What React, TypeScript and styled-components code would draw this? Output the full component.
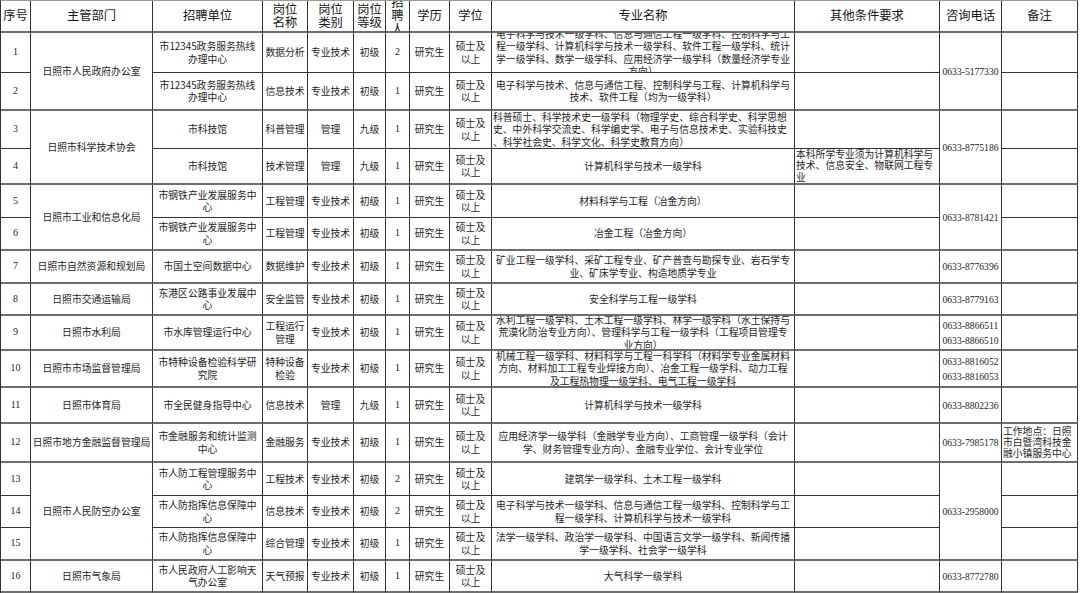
import React from "react";
import styled, { createGlobalStyle } from "styled-components";

const GlobalStyle = createGlobalStyle`
  html, body {
    margin: 0;
    padding: 0;
    background: #fff;
  }
  body {
    font-family: "Noto Sans CJK SC", "Noto Sans", sans-serif;
    color: #1e1e1e;
  }
`;

const Sheet = styled.div<{ $rows: string }>`
  display: grid;
  grid-template-columns: 30px 122px 110px 45px 46px 32px 24px 40px 42px 303px 145px 62px 76px;
  grid-template-rows: ${(p) => p.$rows};
  width: max-content;
  border-left: 1px solid #333;
  border-top: 1px solid #9a9a9a;
`;

const Cell = styled.div<{ $span?: number; $left?: boolean; $end?: boolean }>`
  grid-row: span ${(p) => p.$span ?? 1};
  display: flex;
  align-items: center;
  justify-content: ${(p) => (p.$left ? "flex-start" : "center")};
  text-align: ${(p) => (p.$left ? "left" : "center")};
  box-sizing: border-box;
  min-width: 0;
  min-height: 0;
  padding: 0 ${(p) => (p.$left ? "1px" : "2px")};
  border-right: 1px solid #333;
  border-bottom: ${(p) => (p.$end ? "2px solid #6e6e6e" : "1px solid #333")};
  overflow: hidden;
  white-space: pre;
  font-size: 9.8px;
  line-height: 12.5px;
`;

const HeadCell = styled(Cell)`
  font-size: 12.3px;
  line-height: 13.5px;
  color: #151515;
`;

const NumCell = styled(Cell)`
  font-family: "Liberation Serif", "Noto Sans CJK SC", serif;
  font-size: 10px;
`;

const PhoneCell = styled(Cell)`
  font-family: "Liberation Serif", "Noto Sans CJK SC", serif;
  font-size: 9.6px;
  line-height: 15px;
`;

const NoteCell = styled(Cell)`
  line-height: 11.3px;
`;

type Span = [string, number];

type Row = {
  h: number;
  end?: boolean;
  no: string;
  dept?: Span;
  unit: string;
  post: string;
  kind: string;
  level: string;
  count: string;
  major: string;
  majorLeft?: boolean;
  other?: string;
  phone?: Span;
  note?: string;
};

const headers = [
  "序号",
  "主管部门",
  "招聘单位",
  "岗位\n名称",
  "岗位\n类别",
  "岗位\n等级",
  "招\n聘\n人",
  "学历",
  "学位",
  "专业名称",
  "其他条件要求",
  "咨询电话",
  "备注",
];

const rows: Row[] = [
  {
    h: 40,
    no: "1",
    dept: ["日照市人民政府办公室", 2],
    unit: "市12345政务服务热线\n办理中心",
    post: "数据分析",
    kind: "专业技术",
    level: "初级",
    count: "2",
    major:
      "电子科学与技术一级学科、信息与通信工程一级学科、控制科学与工\n程一级学科、计算机科学与技术一级学科、软件工程一级学科、统计\n学一级学科、数学一级学科、应用经济学一级学科（数量经济学专业\n方向）",
    phone: ["0633-5177330", 2],
  },
  {
    h: 38,
    end: true,
    no: "2",
    unit: "市12345政务服务热线\n办理中心",
    post: "信息技术",
    kind: "专业技术",
    level: "初级",
    count: "1",
    major: "电子科学与技术、信息与通信工程、控制科学与工程、计算机科学与\n技术、软件工程（均为一级学科）",
  },
  {
    h: 38,
    no: "3",
    dept: ["日照市科学技术协会", 2],
    unit: "市科技馆",
    post: "科普管理",
    kind: "管理",
    level: "九级",
    count: "1",
    major:
      "科普硕士、科学技术史一级学科（物理学史、综合科学史、科学思想\n史、中外科学交流史、科学编史学、电子与信息技术史、实验科技史\n、科学社会史、科学文化、科学史教育方向）",
    majorLeft: true,
    phone: ["0633-8775186", 2],
  },
  {
    h: 36,
    end: true,
    no: "4",
    unit: "市科技馆",
    post: "技术管理",
    kind: "管理",
    level: "九级",
    count: "1",
    major: "计算机科学与技术一级学科",
    other: "本科所学专业须为计算机科学与\n技术、信息安全、物联网工程专\n业",
  },
  {
    h: 33,
    no: "5",
    dept: ["日照市工业和信息化局", 2],
    unit: "市钢铁产业发展服务中\n心",
    post: "工程管理",
    kind: "专业技术",
    level: "初级",
    count: "1",
    major: "材料科学与工程（冶金方向）",
    phone: ["0633-8781421", 2],
  },
  {
    h: 33,
    end: true,
    no: "6",
    unit: "市钢铁产业发展服务中\n心",
    post: "工程管理",
    kind: "专业技术",
    level: "初级",
    count: "1",
    major: "冶金工程（冶金方向）",
  },
  {
    h: 33,
    end: true,
    no: "7",
    dept: ["日照市自然资源和规划局", 1],
    unit: "市国土空间数据中心",
    post: "数据维护",
    kind: "专业技术",
    level: "初级",
    count: "1",
    major: "矿业工程一级学科、采矿工程专业、矿产普查与勘探专业、岩石学专\n业、矿床学专业、构造地质学专业",
    phone: ["0633-8776396", 1],
  },
  {
    h: 32,
    end: true,
    no: "8",
    dept: ["日照市交通运输局", 1],
    unit: "东港区公路事业发展中\n心",
    post: "安全监管",
    kind: "专业技术",
    level: "初级",
    count: "1",
    major: "安全科学与工程一级学科",
    phone: ["0633-8779163", 1],
  },
  {
    h: 35,
    end: true,
    no: "9",
    dept: ["日照市水利局", 1],
    unit: "市水库管理运行中心",
    post: "工程运行\n管理",
    kind: "专业技术",
    level: "初级",
    count: "1",
    major:
      "水利工程一级学科、土木工程一级学科、林学一级学科（水土保持与\n荒漠化防治专业方向）、管理科学与工程一级学科（工程项目管理专\n业方向）",
    phone: ["0633-8866511\n0633-8866510", 1],
  },
  {
    h: 37,
    end: true,
    no: "10",
    dept: ["日照市市场监督管理局", 1],
    unit: "市特种设备检验科学研\n究院",
    post: "特种设备\n检验",
    kind: "专业技术",
    level: "初级",
    count: "1",
    major:
      "机械工程一级学科、材料科学与工程一科学科（材料学专业金属材料\n方向、材料加工工程专业焊接方向）、冶金工程一级学科、动力工程\n及工程热物理一级学科、电气工程一级学科",
    phone: ["0633-8816052\n0633-8816053", 1],
  },
  {
    h: 36,
    end: true,
    no: "11",
    dept: ["日照市体育局", 1],
    unit: "市全民健身指导中心",
    post: "信息技术",
    kind: "管理",
    level: "九级",
    count: "1",
    major: "计算机科学与技术一级学科",
    phone: ["0633-8802236", 1],
  },
  {
    h: 39,
    end: true,
    no: "12",
    dept: ["日照市地方金融监督管理局", 1],
    unit: "市金融服务和统计监测\n中心",
    post: "金融服务",
    kind: "专业技术",
    level: "初级",
    count: "1",
    major:
      "应用经济学一级学科（金融学专业方向）、工商管理一级学科（会计\n学、财务管理专业方向）、金融专业学位、会计专业学位",
    phone: ["0633-7985178", 1],
    note: "工作地点：日照\n市白暨湾科技金\n融小镇服务中心",
  },
  {
    h: 33,
    no: "13",
    dept: ["日照市人民防空办公室", 3],
    unit: "市人防工程管理服务中\n心",
    post: "工程技术",
    kind: "专业技术",
    level: "初级",
    count: "2",
    major: "建筑学一级学科、土木工程一级学科",
    phone: ["0633-2958000", 3],
  },
  {
    h: 32,
    no: "14",
    unit: "市人防指挥信息保障中\n心",
    post: "信息技术",
    kind: "专业技术",
    level: "初级",
    count: "2",
    major: "电子科学与技术一级学科、信息与通信工程一级学科、控制科学与工\n程一级学科、计算机科学与技术一级学科",
  },
  {
    h: 33,
    end: true,
    no: "15",
    unit: "市人防指挥信息保障中\n心",
    post: "综合管理",
    kind: "专业技术",
    level: "初级",
    count: "1",
    major: "法学一级学科、政治学一级学科、中国语言文学一级学科、新闻传播\n学一级学科、社会学一级学科",
  },
  {
    h: 32,
    end: true,
    no: "16",
    dept: ["日照市气象局", 1],
    unit: "市人民政府人工影响天\n气办公室",
    post: "天气预报",
    kind: "专业技术",
    level: "初级",
    count: "1",
    major: "大气科学一级学科",
    phone: ["0633-8772780", 1],
  },
];

// a spanned cell always runs to the end of its group, so it takes the group border
const RowCells = ({ row }: { row: Row }) => {
  const e = !!row.end;
  return (
    <>
      <NumCell $end={e}>{row.no}</NumCell>
      {row.dept && (
        <Cell $span={row.dept[1]} $end>
          {row.dept[0]}
        </Cell>
      )}
      <Cell $end={e}>{row.unit}</Cell>
      <Cell $end={e}>{row.post}</Cell>
      <Cell $end={e}>{row.kind}</Cell>
      <Cell $end={e}>{row.level}</Cell>
      <NumCell $end={e}>{row.count}</NumCell>
      <Cell $end={e}>研究生</Cell>
      <Cell $end={e}>{"硕士及\n以上"}</Cell>
      <Cell $end={e} $left={row.majorLeft}>
        {row.major}
      </Cell>
      <NoteCell $end={e} $left>
        {row.other ?? ""}
      </NoteCell>
      {row.phone && (
        <PhoneCell $span={row.phone[1]} $end>
          {row.phone[0]}
        </PhoneCell>
      )}
      <NoteCell $end={e} $left>
        {row.note ?? ""}
      </NoteCell>
    </>
  );
};

const App = (): JSX.Element => {
  const template = ["32px", ...rows.map((r) => `${r.h}px`)].join(" ");
  return (
    <>
      <GlobalStyle />
      <Sheet $rows={template}>
        {headers.map((h) => (
          <HeadCell key={h} $end>
            {h}
          </HeadCell>
        ))}
        {rows.map((r) => (
          <RowCells key={r.no} row={r} />
        ))}
      </Sheet>
    </>
  );
};

export default App;
